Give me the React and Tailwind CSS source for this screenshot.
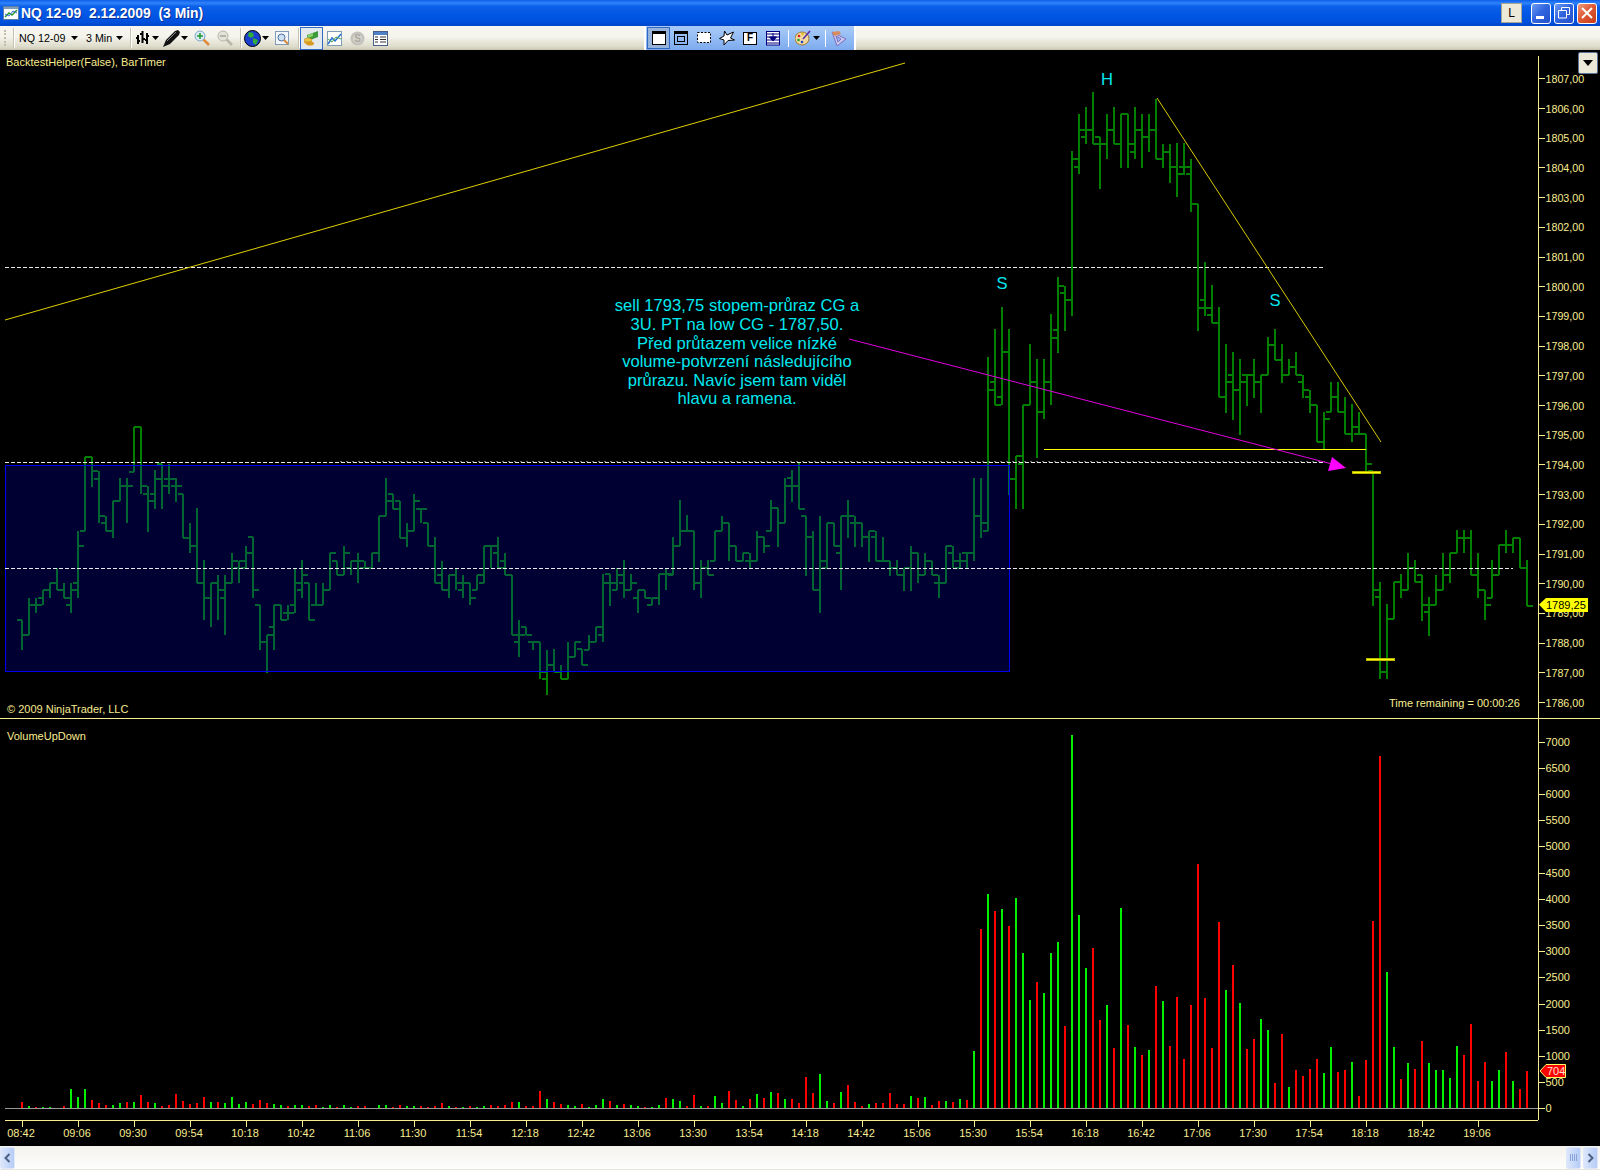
import React from 'react';

const AXIS = '#f8ec90';

// bars are [high, low, open, close], read off as y offsets: y = base + v / 3
const barsA = [
  [600,690,600,645],[533,645,645,555],[533,580,555,555],[510,555,533,510],[488,535,510,488],[443,510,488,510],
  [488,535,510,533],[488,580,555,510],[332,535,488,378],[110,332,332,110],[110,200,110,152],[152,310,178,288],
  [288,332,310,332],[243,355,332,243],[175,243,243,198],[175,310,198,198],[20,155,155,20],[20,222,20,198],
  [198,335,222,243],[150,268,222,178],[132,268,132,198],[132,222,178,178],[175,245,198,198],[222,355,222,355],
  [310,400,355,378],[265,488,378,488],[420,600,488,533],[488,622,533,488],[465,600,488,510],[465,645,533,488],
  [398,488,488,422],[422,488,443,422],[378,443,443,398],[352,533,352,510],[555,690,555,665],[645,758,665,645],
  [555,690,622,555],[555,600,555,600],[555,600,578,578],[443,578,555,488],[420,535,510,465],[488,600,488,600],
  [488,555,555,555],[488,555,555,510],[398,510,510,398],[422,465,422,465],[378,465,465,398],[422,465,443,422],
  [398,490,422,422],[422,443,443,443],[398,443,443,398],[288,425,398,288],[175,288,288,243],[222,268,222,268],
  [243,355,243,355],[310,380,355,332],[222,332,332,243],[268,310,268,268],[310,378,310,378],[352,488,378,488],
  [422,510,465,510],[465,535,510,465],[443,510,465,488],[465,533,510,488],[488,555,488,533],[465,510,510,465],
  [378,488,488,378],[378,443,378,378],[352,443,398,443],[398,465,422,465],[465,645,465,645],[600,710,665,645],
  [620,645,620,645],[665,690,665,665],[665,778,665,757],[690,825,778,735],[688,757,735,757],[735,778,757,778],
  [665,778,778,710],[665,710,710,665],[688,735,688,735],[645,690,690,665],[620,665,665,620],[463,667,645,488],
  [463,557,463,488],[443,510,510,465],[420,535,488,510],[463,510,510,488],[510,580,533,510],[510,533,510,533],
  [533,555,555,533],[463,555,533,463],[443,510,463,463],[352,465,465,378],[240,378,378,332],[285,332,332,332],
  [332,510,332,488],[420,535,488,443],[420,465,443,465],[332,422,422,332],[287,332,332,310],[310,422,310,378],
  [378,422,378,422],[398,422,422,398],[398,445,422,422],[332,422,422,352],[352,400,352,378],[240,332,332,265],
  [265,380,265,310],[175,310,310,198],[150,245,175,198],[130,268,198,268],[287,467,287,352],[332,510,352,510],
  [287,580,510,422],[310,443,443,310],[310,378,310,378],[287,510,398,287],[240,355,287,287],[287,380,310,310],
  [310,380,310,352],[332,425,352,332],[332,422,352,422],[352,422,422,422],[422,467,422,443],[420,465,443,465],
  [443,512,465,443],[378,512,443,398],[398,490,398,465],[398,465,465,422],[422,465,422,465],[465,535,488,488],
  [378,488,488,378],[378,443,398,422],[398,445,443,422],[398,443,398,398],[175,422,398,287],[175,355,287,310],
];
const barsB = [
  [831,1352,1352,930],[748,975,906,975],[682,975,950,815],[748,1245,815,1197],[1128,1288,1197,1128],[975,1288,1152,975],
  [792,975,975,906],[838,1133,906,995],[838,1018,995,906],[703,975,906,773],[592,818,750,618],[618,752,638,660],
  [213,707,660,237],[102,283,260,150],[80,193,170,150],[35,193,150,192],[170,328,170,192],[102,238,192,150],
  [80,193,150,192],[102,263,192,102],[102,263,102,192],[80,238,215,150],[102,263,150,170],[102,217,170,150],
  [57,238,150,238],[192,263,238,217],[192,308,217,260],[190,350,260,282],[190,285,260,260],[237,395,282,372],
  [372,752,372,683],[547,707,660,683],[616,730,705,730],[682,950,730,950],[793,998,950,906],[815,1020,884,930],
  [838,1065,930,906],[884,977,884,884],[838,953,884,906],[884,998,906,884],[770,884,884,795],[748,840,795,840],
  [793,908,840,884],[838,884,884,860],[815,884,860,884],[884,953,906,930],[930,998,950,975],[975,1085,975,1085],
  [995,1110,1085,1017],[905,995,995,950],[905,997,950,997],[950,1062,997,1062],[973,1087,1062,1040],[995,1062,1062,1062],
  [1062,1172,1062,1152],
];
const barsC = [
  [272,678,272,630],[607,898,652,875],[672,898,875,718],[607,718,718,607],[583,655,607,630],[518,630,630,563],
  [540,607,563,607],[585,722,585,675],[652,767,697,675],[585,675,675,630],[518,630,630,585],[518,610,585,518],
  [450,518,518,473],[450,520,473,473],[450,585,473,585],[518,655,585,630],[630,720,630,675],[540,655,655,585],
  [495,585,585,495],[450,520,495,495],[473,520,495,473],[473,565,473,565],[540,677,565,677],
];

const barX = (i) => 22 + 7 * i;

const allBars = [
  ...barsA.map((b) => b.map((v) => Math.round(420 + v / 3))),
  ...barsB.map((b) => b.map((v) => Math.round(80 + v / 3))),
  ...barsC.map((b) => b.map((v) => Math.round(380 + v / 3))),
];

const barsPath = allBars
  .map(([h, l, o, c], i) => {
    const x = barX(i);
    const top = Math.min(h, o, c);
    const bottom = Math.max(l, o, c);
    return `M${x} ${top}V${bottom}M${x - 5} ${o}H${x}M${x} ${c}H${x + 6}`;
  })
  .join('');

// volume heights, same 1/3 px units
const volumes = (
  'r20 g7 r3 g3 g3 r2 r7 g58 g33 g58 r25 r16 r9 g9 g16 r19 g19 r40 r19 g16 r6 r9 r43 r22 r12 r16 r34 g19 r19 g16 ' +
  'g34 g12 g19 r12 r25 r16 g12 g9 r6 g9 g9 r6 r9 g3 g9 r3 g9 g3 r6 r6 r0 g9 g9 r3 r9 g6 g6 r6 r3 r6 ' +
  'r16 g6 r3 g3 r6 g3 g6 r9 r6 r9 r19 g19 r6 r6 r52 g28 r19 r12 g9 g6 r12 g3 g9 g28 r22 g9 r12 g9 g6 r3 ' +
  'g3 g9 r31 g28 g22 r6 r40 g6 r6 g37 g16 r52 r25 g6 r28 g43 r31 g49 r46 g28 r28 r16 r94 r46 g103 g22 r16 g49 r70 r19 ' +
  'r7 g13 r16 r16 r46 r13 r13 g37 r31 g34 r10 r22 g22 r19 g28 r25 g172 r538 g643 r592 g598 r547 g631 g466 g325 r379 g346 g466 g499 r247 ' +
  'g1120 g580 g421 r481 r265 g310 r181 g601 r250 g184 r160 g175 r367 g322 r187 r334 r148 r310 r733 r331 r181 r559 g355 r430 g316 r178 r208 g268 g235 r76 ' +
  'r223 g64 r115 r97 r118 r148 g106 g184 r109 r115 g139 r37 r145 r562 r1057 g409 g184 r88 g136 r118 r202 g136 g115 g115 g91 g187 r160 r253 r82 r139 ' +
  'g82 g115 r169 g82 r58 r112'
)
  .split(' ')
  .map((s) => ({ up: s[0] === 'g', h: Number(s.slice(1)) / 3 }));

const priceY = (p) => 78.3 + (1807 - p) * 29.7;
const prices = Array.from({ length: 22 }, (_, i) => 1807 - i);

const VOL_BASE = 1108.3;
const volY = (v) => VOL_BASE - (v / 500) * 26.2;
const volTicks = Array.from({ length: 15 }, (_, i) => i * 500);

const timeLabel = (i) => {
  const m = 8 * 60 + 42 + i * 24;
  return `${String(Math.floor(m / 60)).padStart(2, '0')}:${String(m % 60).padStart(2, '0')}`;
};
const times = Array.from({ length: 27 }, (_, i) => i);

const note = [
  'sell 1793,75 stopem-průraz CG a',
  '3U. PT na low CG - 1787,50.',
  'Před průtazem velice nízké',
  'volume-potvrzení následujícího',
  'průrazu. Navíc jsem tam viděl',
  'hlavu a ramena.',
];
const noteY = [311, 330, 349, 367, 386, 404];

const Arrow = ({ className = '' }) => (
  <svg width="7" height="4" viewBox="0 0 7 4" className={className}>
    <path d="M0 0H7L3.5 4Z" fill="#000" />
  </svg>
);

const Sep = ({ className = '' }) => <div className={`w-[2px] h-[20px] bg-white border-l border-[#c5c2b0] ${className}`} />;

const ChartIcon = () => (
  <svg width="16" height="16" viewBox="0 0 16 16">
    <rect x="0.5" y="1.5" width="15" height="13" fill="#fff" stroke="#5a7ea8" />
    <rect x="1" y="2" width="14" height="2" fill="#7f9db9" />
    <path d="M2 12L6 8L9 10L14 5" fill="none" stroke="#2a9d2a" strokeWidth="1.5" />
    <path d="M2 9L6 11L10 6L14 8" fill="none" stroke="#3b6fd4" />
  </svg>
);

const BarsIcon = () => (
  <svg width="13" height="16" viewBox="0 0 13 16">
    <path d="M2 5V14M0 8H2M2 11H4M6.500 1V13M4 4H6.500M6.500 9H9M11 3V14M9 10H11M11 6H13" stroke="#000" strokeWidth="2" fill="none" />
  </svg>
);

const PenIcon = () => (
  <svg width="18" height="17" viewBox="0 0 18 17">
    <path d="M0 17L3 10L12 1L15 0L17 2L16 5L7 14Z" fill="#111" />
    <path d="M4 11L13 2" stroke="#888" />
  </svg>
);

const ZoomIcon = ({ plus }) => (
  <svg width="16" height="16" viewBox="0 0 16 16">
    <path d="M9 9L15 15" stroke={plus ? '#e08a3c' : '#b8b6a8'} strokeWidth="2.500" />
    <circle cx="6" cy="6" r="5" fill={plus ? '#dcebf7' : '#e4e3da'} stroke={plus ? '#7fa6c9' : '#b8b6a8'} />
    <path d={plus ? 'M3 6H9M6 3V9' : 'M3 6H9'} stroke={plus ? '#1d9a2c' : '#a5a397'} strokeWidth="1.500" />
  </svg>
);

const GlobeIcon = () => (
  <svg width="17" height="17" viewBox="0 0 17 17">
    <circle cx="8.500" cy="8.500" r="8" fill="#1c3fd0" stroke="#000" />
    <path d="M5 2L9 3L10 6L7 8L4 6ZM9 8L14 10L12 15L9 13Z" fill="#2fae3a" />
  </svg>
);

const PageZoomIcon = () => (
  <svg width="15" height="15" viewBox="0 0 15 15">
    <rect x="0.500" y="0.500" width="13" height="13" fill="#f4f7fb" stroke="#7f9db9" />
    <circle cx="6.500" cy="6.500" r="3.500" fill="#cfe2f5" stroke="#4a6f9c" />
    <path d="M9 9L13 13" stroke="#d88a3c" strokeWidth="2" />
  </svg>
);

const MoneyIcon = () => (
  <svg width="15" height="15" viewBox="0 0 15 15">
    <path d="M3 4L14 0L14 6L4 10Z" fill="#3d9a3a" />
    <path d="M4 4L9 2L9 5L4 7Z" fill="#8bd06a" />
    <ellipse cx="4" cy="11" rx="4" ry="2" fill="#e0a92c" />
    <ellipse cx="4" cy="9" rx="4" ry="2" fill="#f0c64a" stroke="#a87a18" strokeWidth="0.500" />
    <ellipse cx="6" cy="12.500" rx="4" ry="2" fill="#d89a20" />
  </svg>
);

const LineChartIcon = () => (
  <svg width="15" height="15" viewBox="0 0 15 15">
    <rect x="0.500" y="0.500" width="14" height="14" fill="#fff" stroke="#7f9db9" />
    <path d="M1 13L5 7L8 10L14 3" fill="none" stroke="#2a6fd0" strokeWidth="1.500" />
    <path d="M1 8L5 11L9 6L14 8" fill="none" stroke="#4aa84a" />
  </svg>
);

const CoinIcon = () => (
  <svg width="15" height="15" viewBox="0 0 15 15">
    <circle cx="7.500" cy="7.500" r="7" fill="#c4c3bb" />
    <circle cx="7.500" cy="7.500" r="4.500" fill="#d6d5cd" />
    <text x="7.500" y="11" textAnchor="middle" fontSize="10" fontWeight="700" fill="#a9a89f">S</text>
  </svg>
);

const TableIcon = () => (
  <svg width="15" height="15" viewBox="0 0 15 15">
    <rect x="0.500" y="0.500" width="14" height="14" fill="#fff" stroke="#4a5f86" />
    <rect x="1" y="1" width="13" height="3" fill="#4f81c9" />
    <path d="M2 6H5M7 6H13M2 8.500H5M7 8.500H13M2 11H5M7 11H13" stroke="#333" />
  </svg>
);

const WinIcon = ({ inner }) => (
  <svg width="14" height="14" viewBox="0 0 14 14">
    <rect x="0.500" y="0.500" width="13" height="13" fill={inner ? 'none' : '#fff'} stroke="#000" />
    <rect x="1" y="1" width="12" height="2" fill="#000" />
    {inner && <rect x="3.500" y="5.500" width="7" height="5" fill="none" stroke="#000" />}
  </svg>
);

const DashIcon = () => (
  <svg width="14" height="12" viewBox="0 0 14 12">
    <rect x="0.500" y="0.500" width="13" height="10" fill="#fff" stroke="#000" strokeDasharray="2 1.500" />
  </svg>
);

const StarIcon = () => (
  <svg width="16" height="16" viewBox="0 0 16 16">
    <path d="M5.500 1L8 5L14.500 2L11.500 8L15.500 10L9 10.500L5 15L5 10L0.500 8.500L5 6Z" fill="#fff" stroke="#000" />
  </svg>
);

const FIcon = () => (
  <div className="w-[14px] h-[13px] border border-black bg-white flex items-center justify-center text-[10px] leading-none font-bold">F</div>
);

const HatchIcon = () => (
  <svg width="14" height="15" viewBox="0 0 14 15">
    <rect x="0.500" y="0.500" width="13" height="13.500" fill="#fff" stroke="#000080" />
    <path d="M1 3H13M1 6H13M1 9H13M1 12H13" stroke="#000080" />
    <path d="M7 2V6M3.500 6H10.500L7 10Z" fill="#000080" stroke="#000080" />
  </svg>
);

const PaletteIcon = () => (
  <svg width="16" height="16" viewBox="0 0 16 16">
    <ellipse cx="7" cy="8.500" rx="7" ry="6.500" fill="#f2d9a0" stroke="#a07a30" />
    <circle cx="4" cy="6" r="1.300" fill="#e02020" />
    <circle cx="7.500" cy="4" r="1.300" fill="#e0c020" />
    <circle cx="3.500" cy="10" r="1.300" fill="#20a020" />
    <circle cx="7" cy="12" r="1.300" fill="#2040d0" />
    <path d="M8 9L15 1" stroke="#5a2aa0" strokeWidth="1.500" />
  </svg>
);

const PencilTriIcon = () => (
  <svg width="16" height="17" viewBox="0 0 16 17">
    <path d="M1 2L15 9L6 16Z" fill="#c9c6ee" stroke="#7a70c0" />
    <path d="M5 6L10 9L7 12Z" fill="#8fb7ef" stroke="#7a70c0" />
    <path d="M1 2L8 1L10 4L3 6Z" fill="#d88a5c" />
  </svg>
);

const WinButton = ({ tone, children }) => (
  <div className={`w-[20px] h-[21px] rounded-[3px] border border-white flex items-center justify-center ${tone}`}>{children}</div>
);

const BLUE_BTN = 'bg-[linear-gradient(135deg,#6f9cf3_0%,#3166e0_45%,#2450c8_100%)]';

const TitleBar = () => (
  <div className="flex items-center h-[26px] pl-[3px] pr-[3px] bg-[linear-gradient(180deg,#0f5fea_0%,#2f83fb_12%,#0c5fe8_25%,#0056e4_60%,#0050dc_85%,#0046c8_100%)]">
    <ChartIcon />
    <span className="ml-[2px] text-white font-bold text-[13.900px] whitespace-pre [text-shadow:1px_1px_0_#0a2f96]">NQ 12-09  2.12.2009  (3 Min)</span>
    <div className="ml-auto w-[21px] h-[20px] bg-[#ece9d8] border border-[#a8a693] flex items-center justify-center text-[12px] text-black">L</div>
    <div className="flex gap-[3px] ml-[9px]">
      <WinButton tone={BLUE_BTN}><div className="w-[8px] h-[3px] bg-white mt-[8px] -ml-[2px]" /></WinButton>
      <WinButton tone={BLUE_BTN}>
        <svg width="12" height="12" viewBox="0 0 12 12"><path d="M3.500 3V0.500H11.500V7.500H9M0.500 3.500H8.500V11H0.500Z" fill="none" stroke="#fff" /></svg>
      </WinButton>
      <WinButton tone="bg-[linear-gradient(135deg,#f09a7c_0%,#e05a36_45%,#c63a18_100%)]">
        <svg width="12" height="12" viewBox="0 0 12 12"><path d="M1 1L11 11M11 1L1 11" stroke="#fff" strokeWidth="2" /></svg>
      </WinButton>
    </div>
  </div>
);

const ToolBar = () => (
  <div className="flex items-center h-[25px] border-b border-black bg-[linear-gradient(180deg,#f7f6f0_0%,#f4f3ec_45%,#dedccb_85%,#c8c6b2_100%)] text-[10.700px] text-black">
    <div className="ml-[4px] w-[2px] h-[16px] border-l-2 border-dotted border-[#c0bdaa]" />
    <Sep className="ml-[7px]" />
    <span className="ml-[4px] w-[46px] whitespace-nowrap">NQ 12-09</span>
    <Arrow className="ml-[6px]" />
    <span className="ml-[8px] w-[24px] whitespace-nowrap">3 Min</span>
    <Arrow className="ml-[6px]" />
    <Sep className="ml-[7px]" />
    <div className="ml-[4px]"><BarsIcon /></div>
    <Arrow className="ml-[3px]" />
    <div className="ml-[4px]"><PenIcon /></div>
    <Arrow />
    <div className="ml-[6px]"><ZoomIcon plus /></div>
    <div className="ml-[7px]"><ZoomIcon /></div>
    <Sep className="ml-[7px]" />
    <div className="ml-[2px]"><GlobeIcon /></div>
    <Arrow className="ml-[1px]" />
    <div className="ml-[6px]"><PageZoomIcon /></div>
    <Sep className="ml-[8px]" />
    <div className="w-[23px] h-[23px] bg-[#e4e9ee] border border-[#316ac5] flex items-center justify-center"><MoneyIcon /></div>
    <div className="ml-[4px]"><LineChartIcon /></div>
    <div className="ml-[8px]"><CoinIcon /></div>
    <div className="ml-[8px]"><TableIcon /></div>
    <div className="ml-[256px] w-[212px] h-[24px] border-x-2 border-white bg-[linear-gradient(180deg,#a9caf7_0%,#8fb9f3_60%,#7eaaee_100%)] flex items-center">
      <div className="ml-[1px] w-[23px] h-[22px] bg-[#96b3dc] border border-[#316ac5] flex items-center justify-center"><WinIcon /></div>
      <div className="ml-[4px]"><WinIcon inner /></div>
      <div className="ml-[9px]"><DashIcon /></div>
      <div className="ml-[8px]"><StarIcon /></div>
      <div className="ml-[8px]"><FIcon /></div>
      <div className="ml-[9px]"><HatchIcon /></div>
      <div className="ml-[8px] w-[1px] h-[17px] bg-white" />
      <div className="ml-[6px]"><PaletteIcon /></div>
      <Arrow className="ml-[2px]" />
      <div className="ml-[5px] w-[1px] h-[17px] bg-white" />
      <div className="ml-[5px]"><PencilTriIcon /></div>
    </div>
  </div>
);

const PricePane = () => (
  <svg width="1600" height="668" viewBox="0 51 1600 668" className="block">
    <path d={barsPath} stroke="#007f00" strokeWidth="2" fill="none" shapeRendering="crispEdges" />
    <rect x="5.500" y="465.500" width="1004" height="206" fill="rgba(0,0,255,0.2)" stroke="#0000f0" shapeRendering="crispEdges" />

    <g stroke="#e8e8e8" strokeDasharray="4 2" shapeRendering="crispEdges">
      <path d="M5 267.500H1325" />
      <path d="M5 462.500H1325" />
      <path d="M5 568.500H1513" />
    </g>
    <path d="M340 461.500H1325" stroke="#777" strokeDasharray="2 4" shapeRendering="crispEdges" />

    <path d="M5 320L905 63" stroke="#e0d000" fill="none" />
    <path d="M1157 98L1381 442" stroke="#d8c800" fill="none" />
    <path d="M1044 449.500H1366" stroke="#ffff00" shapeRendering="crispEdges" />
    <path d="M849 339L1332 464" stroke="#e000e0" fill="none" />
    <path d="M1332 457L1346 468L1328 471Z" fill="#ff00ff" />
    <rect x="1352" y="471" width="29" height="3" fill="#b8b800" />
    <rect x="1353" y="472" width="27" height="1" fill="#ffff00" />
    <rect x="1366" y="658" width="29" height="3" fill="#b8b800" />
    <rect x="1367" y="659" width="27" height="1" fill="#ffff00" />

    <g fill="#00e8f0" fontSize="16.600" textAnchor="middle">
      <text x="1107" y="85">H</text>
      <text x="1002" y="289">S</text>
      <text x="1275" y="306">S</text>
      {note.map((line, i) => (
        <text key={line} x="737" y={noteY[i]}>{line}</text>
      ))}
    </g>

    <g fill={AXIS} fontSize="11">
      <text x="6" y="66">BacktestHelper(False), BarTimer</text>
      <text x="7" y="713">© 2009 NinjaTrader, LLC</text>
      <text x="1389" y="707">Time remaining = 00:00:26</text>
      {prices.map((p) => (
        <text key={p} x="1545.500" y={priceY(p) + 4.5} fontSize="10.700">{p},00</text>
      ))}
    </g>
    <g stroke={AXIS} shapeRendering="crispEdges" fill="none">
      <path d="M1538.500 56V719" />
      <path d="M0 718.500H1600" />
      {prices.map((p) => (
        <path key={p} d={`M1538 ${Math.round(priceY(p)) + 0.5}H1545`} />
      ))}
    </g>

    <path d="M1539 604.500L1546 598H1588V612H1546Z" fill="#ffff00" />
    <text x="1546" y="609" fontSize="11" fill="#000">1789,25</text>
  </svg>
);

const VolumePane = () => (
  <svg width="1600" height="427" viewBox="0 719 1600 427" className="block">
    {volumes.map((v, i) => (
      <rect
        key={i}
        x={barX(i) - 1}
        y={VOL_BASE - v.h}
        width="2"
        height={v.h}
        fill={v.up ? '#00f000' : '#ff0000'}
        shapeRendering="crispEdges"
      />
    ))}
    <path d="M5 1108.500H1538" stroke="#999" shapeRendering="crispEdges" />

    <g stroke={AXIS} shapeRendering="crispEdges" fill="none">
      <path d="M1538.500 719V1120" />
      <path d="M5 1120.500H1538" />
      {volTicks.map((v) => (
        <path key={v} d={`M1538 ${Math.round(volY(v)) + 0.5}H1545`} />
      ))}
      {times.map((i) => (
        <path key={i} d={`M${barX(i * 8) + 0.5} 1120V1127`} />
      ))}
    </g>
    <g fill={AXIS} fontSize="11">
      <text x="7" y="740">VolumeUpDown</text>
      {volTicks.map((v) => (
        <text key={v} x="1545.500" y={volY(v) + 4}>{v}</text>
      ))}
      {times.map((i) => (
        <text key={i} x={barX(i * 8) - 1} y="1137" textAnchor="middle">{timeLabel(i)}</text>
      ))}
    </g>

    <path d="M1540 1071L1546 1064.500H1565.500V1077.500H1546Z" fill="#ff0000" stroke="#ffff66" />
    <text x="1547" y="1075" fontSize="11" fill="#ffe0d0">704</text>
  </svg>
);

const ScrollButton = ({ d, className = '', children }) => (
  <div className={`w-[15px] h-[22px] rounded-[2px] border border-[#dfe8fb] bg-[linear-gradient(90deg,#dbe6fb_0%,#b6ccf6_100%)] flex items-center justify-center ${className}`}>
    {d && (
      <svg width="7" height="10" viewBox="0 0 7 10"><path d={d} fill="none" stroke="#4d6185" strokeWidth="2" /></svg>
    )}
    {children}
  </div>
);

const ScrollBar = () => (
  <div className="flex items-center h-[24px] bg-[linear-gradient(180deg,#f3f2ec_0%,#fefefd_100%)] border-b border-[#e8e6da]">
    <ScrollButton d="M5.500 1L1.500 5L5.500 9" />
    <ScrollButton className="ml-auto">
      <div className="w-[7px] h-[7px] bg-[repeating-linear-gradient(90deg,#8aa4d8_0px,#8aa4d8_1px,transparent_1px,transparent_2px)]" />
    </ScrollButton>
    <ScrollButton className="ml-[2px] mr-[2px]" d="M1.500 1L5.500 5L1.500 9" />
  </div>
);

export default function App() {
  return (
    <div className="w-[1600px] h-[1170px] overflow-hidden bg-black font-['Liberation_Sans',Arial,sans-serif]">
      <TitleBar />
      <ToolBar />
      <div className="relative bg-black">
        <PricePane />
        <VolumePane />
        <div className="absolute top-[1px] right-[2px] w-[20px] h-[22px] rounded-[2px] border border-[#5a7499] bg-[#ece9d8] flex items-center justify-center">
          <svg width="10" height="6" viewBox="0 0 10 6"><path d="M0 0H10L5 6Z" fill="#000" /></svg>
        </div>
      </div>
      <ScrollBar />
    </div>
  );
}
